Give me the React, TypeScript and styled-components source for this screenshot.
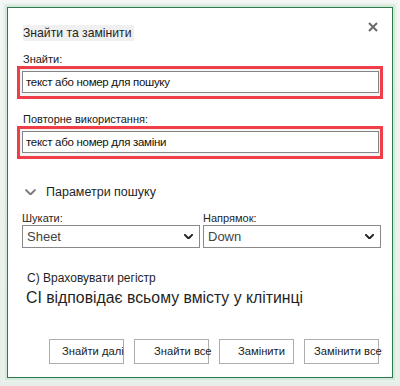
import React from "react";
import styled, { createGlobalStyle } from "styled-components";

const GlobalStyle = createGlobalStyle`
  html, body {
    margin: 0;
    padding: 0;
    background: #eef3ef;
  }
  body {
    font-family: "Liberation Sans", Arial, sans-serif;
    color: #1f1f1f;
  }
`;

const buttons = [
  { label: "Знайти далі", shift: 12 },
  { label: "Знайти все", shift: 19 },
  { label: "Замінити", shift: 18 },
  { label: "Замінити все", shift: 9 },
];

const Chevron = ({ size = 10, color = "#1f1f1f", stroke = 2 }) => (
  <svg width={size} height={size * 0.6} viewBox="0 0 10 6" fill="none">
    <path d="M1 1l4 4 4-4" stroke={color} strokeWidth={stroke} strokeLinecap="round" strokeLinejoin="round" />
  </svg>
);

export default function App() {
  return (
    <>
      <GlobalStyle />
      <Page>
        <Dialog>
          <Header>
            <Title>Знайти та замінити</Title>
            <Close aria-label="close">
              <svg width="10" height="10" viewBox="0 0 10 10">
                <path d="M1 1l8 8M9 1l-8 8" stroke="#6a6a6a" strokeWidth="2" />
              </svg>
            </Close>
          </Header>

          <Label top={12}>Знайти:</Label>
          <Highlight>
            <Field>текст або номер для пошуку</Field>
          </Highlight>

          <Label top={14}>Повторне використання:</Label>
          <Highlight>
            <Field>текст або номер для заміни</Field>
          </Highlight>

          <Options>
            <Chevron size={11} color="#7a7a7a" stroke={1.8} />
            <span>Параметри пошуку</span>
          </Options>

          <SelectRow>
            <SelectGroup>
              <SmallLabel>Шукати:</SmallLabel>
              <Select>
                <span>Sheet</span>
                <Chevron size={9} stroke={2.2} />
              </Select>
            </SelectGroup>
            <SelectGroup>
              <SmallLabel>Напрямок:</SmallLabel>
              <Select>
                <span>Down</span>
                <Chevron size={9} stroke={2.2} />
              </Select>
            </SelectGroup>
          </SelectRow>

          <CaseLine>С) Враховувати регістр</CaseLine>
          <WholeCell>СІ відповідає всьому вмісту у клітинці</WholeCell>

          <Buttons>
            {buttons.map((b) => (
              <Button key={b.label} shift={b.shift}>
                {b.label}
              </Button>
            ))}
          </Buttons>
        </Dialog>
      </Page>
    </>
  );
}

const Page = styled.div`
  width: 400px;
  height: 386px;
  box-sizing: border-box;
  padding: 7px 7px 8px 7px;
  background: linear-gradient(#f4f7f5, #e6efe9);
`;

const Dialog = styled.div`
  box-sizing: border-box;
  width: 386px;
  height: 371px;
  background: #fff;
  border: 1px solid #2f7a4c;
  box-shadow: 0 0 0 2px #d3e8da, 0 0 0 4px #e8f2eb;
  padding: 12px 10px 0 9px;
  display: flex;
  flex-direction: column;
`;

const Header = styled.div`
  display: flex;
  justify-content: space-between;
  align-items: flex-start;
  padding-left: 6px;
`;

const Title = styled.div`
  margin-top: 5px;
  font-size: 12.2px;
  line-height: 16px;
  background: #f0f0f0;
  padding-right: 3px;
`;

const Close = styled.div`
  width: 14px;
  height: 14px;
  display: flex;
  align-items: center;
  justify-content: center;
  margin-right: 2px;
`;

const Label = styled.div<{ top: number }>`
  margin-top: ${(p) => p.top}px;
  padding-left: 6px;
  font-size: 11px;
  line-height: 13px;
  color: #202020;
`;

const Highlight = styled.div`
  box-sizing: border-box;
  width: 366px;
  border: 3px solid #ef3e48;
  padding: 2px 1px 3px 2px;
  background: #f4f4f4;
`;

const Field = styled.div`
  box-sizing: border-box;
  height: 22px;
  border: 1px solid #858585;
  background: #fff;
  font-size: 11.5px;
  letter-spacing: -0.3px;
  line-height: 20px;
  padding-left: 3px;
  color: #111;
`;

const Options = styled.div`
  margin-top: 25px;
  padding-left: 8px;
  display: flex;
  align-items: center;
  gap: 10px;
  font-size: 12.5px;
  line-height: 16px;
`;

const SelectRow = styled.div`
  margin-top: 12px;
  padding-left: 5px;
  display: flex;
  gap: 3px;
`;

const SelectGroup = styled.div`
  display: flex;
  flex-direction: column;
`;

const SmallLabel = styled.div`
  font-size: 11px;
  line-height: 13px;
`;

const Select = styled.div`
  box-sizing: border-box;
  width: 178px;
  height: 23px;
  border: 1px solid #8a8a8a;
  display: flex;
  align-items: center;
  justify-content: space-between;
  padding: 0 6px 0 4px;
  font-size: 13px;
  color: #444;
`;

const CaseLine = styled.div`
  margin-top: 23px;
  padding-left: 10px;
  font-size: 12px;
  line-height: 14px;
`;

const WholeCell = styled.div`
  margin-top: 3px;
  padding-left: 9px;
  font-size: 15.8px;
  line-height: 20px;
`;

const Buttons = styled.div`
  margin-top: 31px;
  padding-left: 32px;
  display: flex;
  gap: 10px;
`;

const Button = styled.div<{ shift: number }>`
  box-sizing: border-box;
  width: 75px;
  height: 25px;
  border: 1px solid #adadad;
  background: #fff;
  font-size: 11.2px;
  line-height: 23px;
  white-space: nowrap;
  padding-left: ${(p) => p.shift}px;
  color: #1a1a1a;
`;
